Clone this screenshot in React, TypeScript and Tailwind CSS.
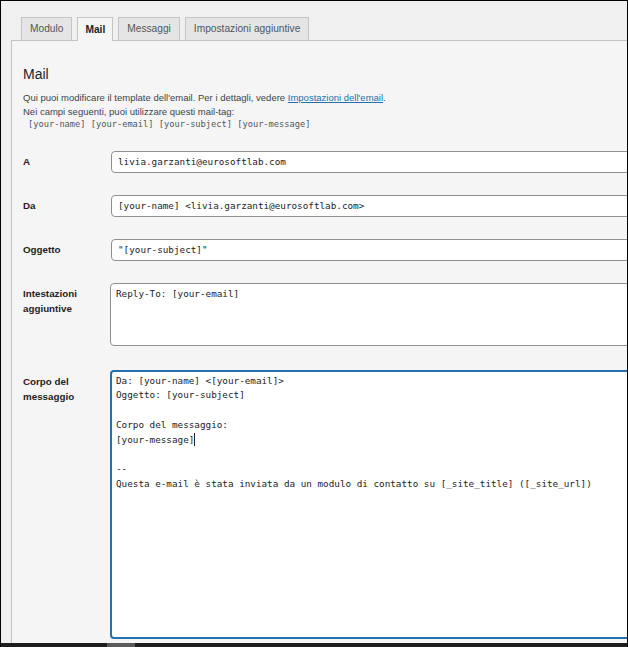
import React from "react";

const sans = { fontFamily: '"Liberation Sans", Arial, sans-serif' };

function Tab({ label, active }: { label: string; active?: boolean }) {
  return active ? (
    <div className="h-[24px] -mb-px px-[7px] border border-b-0 border-[#c3c4c7] bg-[#f5f5f5] text-[10.2px] font-bold text-[#1d2327] flex items-center leading-[14px]">
      {label}
    </div>
  ) : (
    <div className="h-[23px] px-[8px] border border-b-0 border-[#c3c4c7] bg-[#e5e5e5] text-[10.2px] text-[#50575e] flex items-center leading-[14px]">
      {label}
    </div>
  );
}

const mono = "font-['DejaVu_Sans_Mono','Liberation_Mono',monospace] text-[9.3px] text-[#1d2327]";

function InputRow({ label, value }: { label: string; value: string }) {
  return (
    <div className="flex items-center mb-[22px]">
      <div className="w-[88px] shrink-0 text-[9.8px] font-bold text-[#1d2327] leading-[15px]">{label}</div>
      <div className={`h-[22px] w-[560px] shrink-0 border border-[#8c8f94] rounded-[4px] bg-white px-[6px] flex items-center whitespace-pre ${mono}`}>
        {value}
      </div>
    </div>
  );
}

export default function App() {
  const body = [
    "Da: [your-name] <[your-email]>",
    "Oggetto: [your-subject]",
    "",
    "Corpo del messaggio:",
    "[your-message]",
    "",
    "--",
    "Questa e-mail è stata inviata da un modulo di contatto su [_site_title] ([_site_url])",
  ];
  return (
    <div
      className="w-[628px] h-[647px] overflow-hidden bg-[#f0f0f0] border-l border-t border-r border-black flex flex-col"
      style={sans}
    >
      <div className="h-[39px] shrink-0 pl-[20px] flex items-end gap-[5px] relative z-10">
        <Tab label="Modulo" />
        <Tab label="Mail" active />
        <Tab label="Messaggi" />
        <Tab label="Impostazioni aggiuntive" />
      </div>
      <div className="flex-1 ml-[10px] border-l border-t border-[#c3c4c7] bg-[#f5f5f5] pl-[11px] pt-[24px] min-h-0">
        <div className="text-[14px] leading-[18px] text-[#1d2327]">Mail</div>
        <div className="mt-[8px] text-[9.5px] leading-[13.6px] text-[#3c434a]">
          <div>
            Qui puoi modificare il template dell'email. Per i dettagli, vedere{" "}
            <span className="text-[#2271b1] underline">Impostazioni dell'email</span>.
          </div>
          <div>Nei campi seguenti, puoi utilizzare questi mail-tag:</div>
          <div className="pl-[5px] font-['DejaVu_Sans_Mono','Liberation_Mono',monospace] text-[8.7px] text-[#50575e] whitespace-pre">
            [your-name] [your-email] [your-subject] [your-message]
          </div>
        </div>
        <div className="mt-[19px]">
          <InputRow label="A" value="livia.garzanti@eurosoftlab.com" />
          <InputRow label="Da" value="[your-name] <livia.garzanti@eurosoftlab.com>" />
          <InputRow label="Oggetto" value={'"[your-subject]"'} />
          <div className="flex mb-[24px]">
            <div className="w-[87px] shrink-0 pt-[3px] text-[9.8px] font-bold text-[#1d2327] leading-[15px]">
              Intestazioni
              <br />
              aggiuntive
            </div>
            <div className={`h-[63px] w-[560px] shrink-0 border border-[#8c8f94] rounded-[4px] bg-white px-[5px] pt-[3px] leading-[14.6px] whitespace-pre ${mono}`}>
              Reply-To: [your-email]
            </div>
          </div>
          <div className="flex">
            <div className="w-[87px] shrink-0 pt-[4px] text-[9.8px] font-bold text-[#1d2327] leading-[15px]">
              Corpo del
              <br />
              messaggio
            </div>
            <div className={`h-[269px] w-[560px] shrink-0 border-2 border-[#2271b1] rounded-[4px] bg-white px-[4px] pt-[2px] leading-[14.7px] whitespace-pre ${mono}`}>
              {body.map((l, i) => (
                <div key={i} className="h-[14.7px]">
                  {l}
                  {i === 4 && <span className="inline-block w-px h-[13px] bg-[#1d2327] align-middle -mt-[2px]" />}
                </div>
              ))}
            </div>
          </div>
        </div>
      </div>
      <div className="h-[4px] shrink-0 bg-[#1e1e1e] flex">
        <div className="ml-[106px] w-[28px] h-full bg-[#5a5a5a]" />
      </div>
    </div>
  );
}
